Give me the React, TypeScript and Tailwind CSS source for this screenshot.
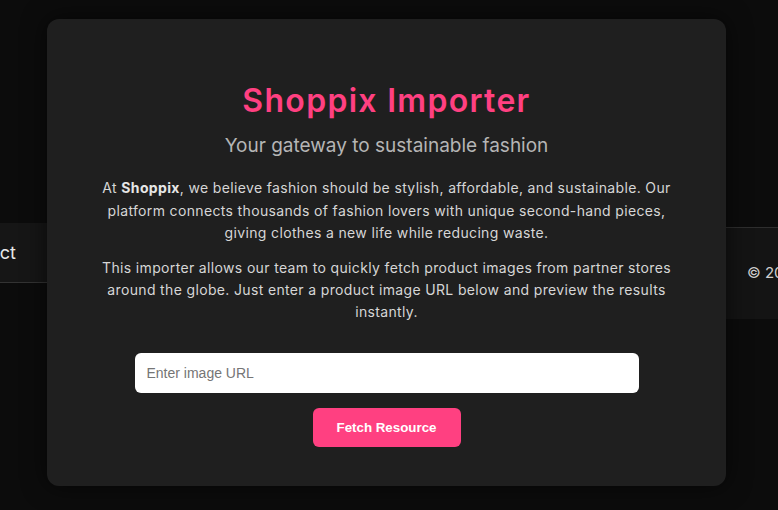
export default function App() {
  return (
    <div className="relative h-[510px] w-[778px] overflow-hidden bg-[#0c0c0c] font-['Inter',sans-serif]">
      {/* page behind the dialog */}
      <div className="flex h-full items-start justify-between">
        <div className="-ml-[51px] mt-[223px] flex h-[60px] w-[300px] items-center border-b border-[#333] bg-[#161616]">
          <span className="text-[18px] text-[#e8e8e8]">Contact</span>
        </div>
        <div className="mt-[227px] flex h-[92px] w-[200px] items-center overflow-hidden border-t border-[#2e2e2e] bg-[#141414] pl-[169px]">
          <span className="whitespace-nowrap text-[15px] text-[#cfcfcf]">© 2024 Shoppix. All rights reserved.</span>
        </div>
      </div>

      {/* dialog */}
      <div className="absolute inset-0 flex items-start pl-[47px] pt-[19px]">
        <div className="w-[679px] rounded-xl bg-[#1f1f1f] px-12 pb-[39px] pt-[63px] text-center shadow-[0_0_24px_rgba(0,0,0,0.6)]">
          <h1 className="text-[32px] font-semibold leading-[38.4px] tracking-[1.3px] text-[#ff4081]">Shoppix Importer</h1>
          <p className="mt-3 text-[19px] leading-7 text-[#b5b5b5]">Your gateway to sustainable fashion</p>
          <p className="mt-[17px] text-[14px] leading-[22.4px] tracking-[0.35px] text-[#d6d6d6]">
            At <strong className="font-bold text-[#e6e6e6]">Shoppix</strong>, we believe fashion should be stylish,
            affordable, and sustainable. Our platform connects thousands of fashion lovers with unique second-hand
            pieces, giving clothes a new life while reducing waste.
          </p>
          <p className="mt-[12px] text-[14px] leading-[22.4px] tracking-[0.35px] text-[#d6d6d6]">
            This importer allows our team to quickly fetch product images from partner stores around the globe. Just
            enter a product image URL below and preview the results instantly.
          </p>
          <input
            type="text"
            placeholder="Enter image URL"
            className="mx-auto mt-[29px] block h-10 w-[504px] rounded-md bg-white px-3 font-['Liberation_Sans',Arial,sans-serif] text-[14px] text-[#222] outline-none placeholder:text-[#757575]"
          />
          <button className="mt-[15px] rounded-md bg-[#ff4081] px-6 py-3 font-['Liberation_Sans',Arial,sans-serif] text-[13.33px] font-bold leading-[15px] text-white">
            Fetch Resource
          </button>
        </div>
      </div>
    </div>
  )
}
